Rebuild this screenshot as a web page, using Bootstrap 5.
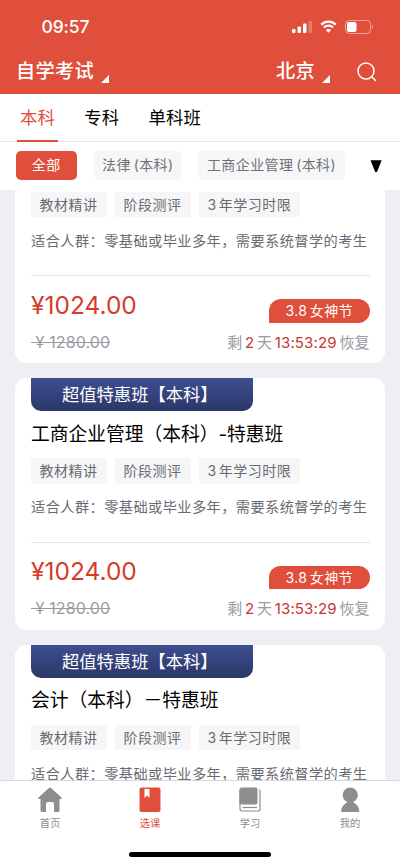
<!DOCTYPE html>
<html lang="zh-CN">
<head>
<meta charset="utf-8">
<meta name="viewport" content="width=device-width, initial-scale=1">
<title>选课</title>
<link rel="stylesheet" href="https://cdn.jsdelivr.net/npm/bootstrap@5.3.0/dist/css/bootstrap.min.css">
<style>
:root{--red:#e04f3b;--price:#d63b2c}
body{font-family:Inter,"Noto Sans CJK SC",sans-serif;background:#eeeef3;line-height:1.2;height:865px;overflow:hidden;color:#000}
svg{display:block;flex:none}
.top{background:var(--red);height:94px;border-bottom:1px solid #cf5140}
.status{height:53px;padding:0 27px 0 41.5px}
.clock{font-size:17.5px;font-weight:500;letter-spacing:-.1px}
.topbar{height:37px;padding:0 23.5px 0 16px;font-size:19.2px;font-weight:500;letter-spacing:.35px}
.tri{margin:15px 0 0 6.5px}
.search{margin-left:27px}
.tabs{height:47.5px;border-bottom:1px solid #e7e7e9;padding:0 17px;font-size:17.4px;gap:23.5px}
.tabs a{color:#000;text-decoration:none;height:47.5px;line-height:48px;padding:0 3px}
.tabs a.active{color:var(--red);border-bottom:2px solid var(--red)}
.filters{height:48.5px;padding:9.5px 16px 0 15.5px;gap:16.5px;font-size:14px}
.pill{height:28.5px;border-radius:5px;background:#f6f6f7;color:#6e737b;line-height:28.5px;padding:0 8.5px;white-space:nowrap;letter-spacing:.4px;word-spacing:-1.5px}
.pill.on{background:var(--red);color:#fff;width:61.5px;padding:0;text-align:center}
.drop{margin:9px 2px 0 auto}
.feed{height:590px;padding:0 15px;gap:15px}
.course{flex:none;height:251.5px;border-radius:11px;background:#fff;padding:0 15.5px 0 16px}
.course.scrolled{height:173px;border-radius:0 0 11px 11px;padding-top:1.5px}
.course.scrolled .tags{margin-top:0}
.ribbon{width:221.5px;height:33px;border-radius:0 0 10px 10px;background:linear-gradient(#3e4f91,#2a3768);color:#fff;font-size:17.3px;line-height:33px;padding-left:31px;white-space:nowrap}
.name{font-size:18.75px;line-height:26px;margin-top:10.5px;white-space:nowrap}
.tags{gap:8.5px;margin-top:10.5px}
.tags span{height:25.5px;line-height:25.5px;background:#f6f6f7;color:#676c73;font-size:14px;letter-spacing:.5px;padding:0 8.5px;white-space:nowrap;width:75.5px}
.tags span:last-child{width:101px;word-spacing:-2.3px}
.desc{font-size:14.2px;letter-spacing:.44px;color:#676c73;line-height:20px;margin-top:13.5px;white-space:nowrap}
.rule{height:1px;background:#e3e4e6;margin-top:24.5px}
.price{font-size:24.5px;line-height:30px;color:var(--price);margin-top:13.5px}
.old{font-size:16px;letter-spacing:.12px;color:#989ba3;line-height:20px;text-decoration:line-through;margin-top:12px;white-space:pre}
.promo{width:100.5px;height:23.5px;line-height:24px;border-radius:12px 12px 12px 0;background:var(--red);color:#fff;font-size:14px;letter-spacing:.4px;word-spacing:-2px;text-align:center;margin-top:23px}
.left{font-size:15px;word-spacing:-1.5px;color:#989ba3;line-height:20px;margin-top:10px;white-space:nowrap}
.left b{font-weight:400;letter-spacing:.15px;color:#c93632}
.bottom{height:85px;background:#fff;border-top:1px solid #d9d9dc;padding-top:6px}
.bottom a{color:#8e8e8e;text-decoration:none;font-size:10.3px;line-height:14px;gap:3px}
.bottom a.active{color:var(--red)}
.home{width:142.5px;height:5px;border-radius:3px;background:#000;margin:21.5px auto 0}
</style>
<script src="https://cdn.jsdelivr.net/npm/bootstrap@5.3.0/dist/js/bootstrap.bundle.min.js"></script>
</head>
<body>
<header class="top text-white">
  <div class="status d-flex justify-content-between align-items-center">
    <span class="clock">09:57</span>
    <div class="d-flex align-items-center">
      <svg width="20" height="14" viewBox="0 0 20 14" fill="#fff"><rect y="9" width="3.5" height="4" rx="1"/><rect x="5.5" y="6.5" width="3.5" height="6.5" rx="1"/><rect x="11" y="3.5" width="3.5" height="9.5" rx="1"/><rect x="16.5" y="1" width="3.5" height="12" rx="1" opacity=".25"/></svg>
      <svg class="ms-2" width="17" height="13" viewBox="0 0 17 13"><path d="M1.2 4.6C5.2.6 11.8.6 15.8 4.6M4 7.4c2.5-2.4 6.5-2.4 9 0" fill="none" stroke="#fff" stroke-width="2.3"/><path d="M5.8 9.9c1.6-1.3 3.8-1.3 5.4 0L8.5 12.7z" fill="#fff"/></svg>
      <svg class="ms-2" width="28" height="14" viewBox="0 0 28 14"><rect x=".5" y=".5" width="25" height="13" rx="3.8" fill="none" stroke="#fff" stroke-opacity=".5"/><rect x="2" y="2" width="9.5" height="10" rx="2" fill="#fff"/><path d="M27 5v4c1.3-.7 1.3-3.3 0-4" fill="#fff" opacity=".5"/></svg>
    </div>
  </div>
  <div class="topbar d-flex align-items-center">
    <span>自学考试</span><svg class="tri" width="8" height="8"><path d="M8 0v8H0z" fill="#fff"/></svg>
    <span class="ms-auto">北京</span><svg class="tri" width="8" height="8"><path d="M8 0v8H0z" fill="#fff"/></svg>
    <svg class="search" width="20" height="20" viewBox="0 0 20 20" fill="none" stroke="#fff" stroke-width="1.5" stroke-linecap="round"><circle cx="9" cy="9" r="8"/><path d="M14.8 14.8l3.7 3.7"/></svg>
  </div>
</header>
<nav class="tabs d-flex bg-white"><a class="active" href="#">本科</a><a href="#">专科</a><a href="#">单科班</a></nav>
<div class="filters d-flex bg-white">
  <span class="pill on">全部</span><span class="pill">法律 (本科)</span><span class="pill">工商企业管理 (本科)</span>
  <svg class="drop" width="12" height="12"><path d="M.5.3h11.2L7 12H5.2z"/></svg>
</div>
<main class="feed d-flex flex-column overflow-hidden">
  <article class="course scrolled">
    <div class="tags d-flex"><span>教材精讲</span><span>阶段测评</span><span>3 年学习时限</span></div>
    <div class="desc">适合人群：零基础或毕业多年，需要系统督学的考生</div>
    <div class="rule"></div>
    <div class="d-flex justify-content-between">
      <div><div class="price">¥1024.00</div><div class="old"> ¥ 1280.00</div></div>
      <div class="d-flex flex-column align-items-end"><div class="promo">3.8 女神节</div><div class="left">剩 <b>2</b> 天 <b>13:53:29</b> 恢复</div></div>
    </div>
  </article>
  <article class="course">
    <div class="ribbon">超值特惠班【本科】</div>
    <div class="name">工商企业管理（本科）-特惠班</div>
    <div class="tags d-flex"><span>教材精讲</span><span>阶段测评</span><span>3 年学习时限</span></div>
    <div class="desc">适合人群：零基础或毕业多年，需要系统督学的考生</div>
    <div class="rule"></div>
    <div class="d-flex justify-content-between">
      <div><div class="price">¥1024.00</div><div class="old"> ¥ 1280.00</div></div>
      <div class="d-flex flex-column align-items-end"><div class="promo">3.8 女神节</div><div class="left">剩 <b>2</b> 天 <b>13:53:29</b> 恢复</div></div>
    </div>
  </article>
  <article class="course">
    <div class="ribbon">超值特惠班【本科】</div>
    <div class="name">会计（本科）－特惠班</div>
    <div class="tags d-flex"><span>教材精讲</span><span>阶段测评</span><span>3 年学习时限</span></div>
    <div class="desc">适合人群：零基础或毕业多年，需要系统督学的考生</div>
  </article>
</main>
<footer class="bottom">
  <nav class="row g-0 text-center">
    <a class="col d-flex flex-column align-items-center" href="#"><svg width="26" height="26" viewBox="0 0 26 26"><path d="M12.2.8q.8-.7 1.6 0L24.5 10.5q1 1.2-.5 1.5H22.5V23.5q0 1.500-1.500 1.500H17V17q0-2-2-2H11Q9 15 9 17v8H5q-1.500 0-1.500-1.500V12H2Q.5 11.700 1.500 10.500z" fill="#8e8e8e"/></svg>首页</a>
    <a class="col d-flex flex-column align-items-center active" href="#"><svg width="22" height="26" viewBox="0 0 22 26"><rect x=".5" y=".5" width="21" height="24.5" rx="2" fill="#e04f3b"/><path d="M5.5 2h5v9L8 8.500 5.500 11z" fill="#fff"/></svg>选课</a>
    <a class="col d-flex flex-column align-items-center" href="#"><svg width="22" height="26" viewBox="0 0 22 26" fill="none" stroke="#8e8e8e"><rect x=".5" y=".5" width="18" height="17" rx="2" fill="#8e8e8e" stroke="none"/><path d="M1 3v18.500Q1 24 3.500 24H19q2 0 2-2V4.500q0-1-1-1.500" stroke-width="1.200"/><path d="M3.500 20.500h14.500" stroke-width="1.200"/></svg>学习</a>
    <a class="col d-flex flex-column align-items-center" href="#"><svg width="20" height="26" viewBox="0 0 20 26" fill="#8e8e8e"><circle cx="10.200" cy="8" r="7.600"/><path d="M7 14h6.500v1.500Q18.500 18 19.300 23.500q.2 1.500-.8 1.500H1.900q-1 0-.8-1.500Q2 18 7 15.500z"/></svg>我的</a>
  </nav>
  <div class="home"></div>
</footer>
</body>
</html>
